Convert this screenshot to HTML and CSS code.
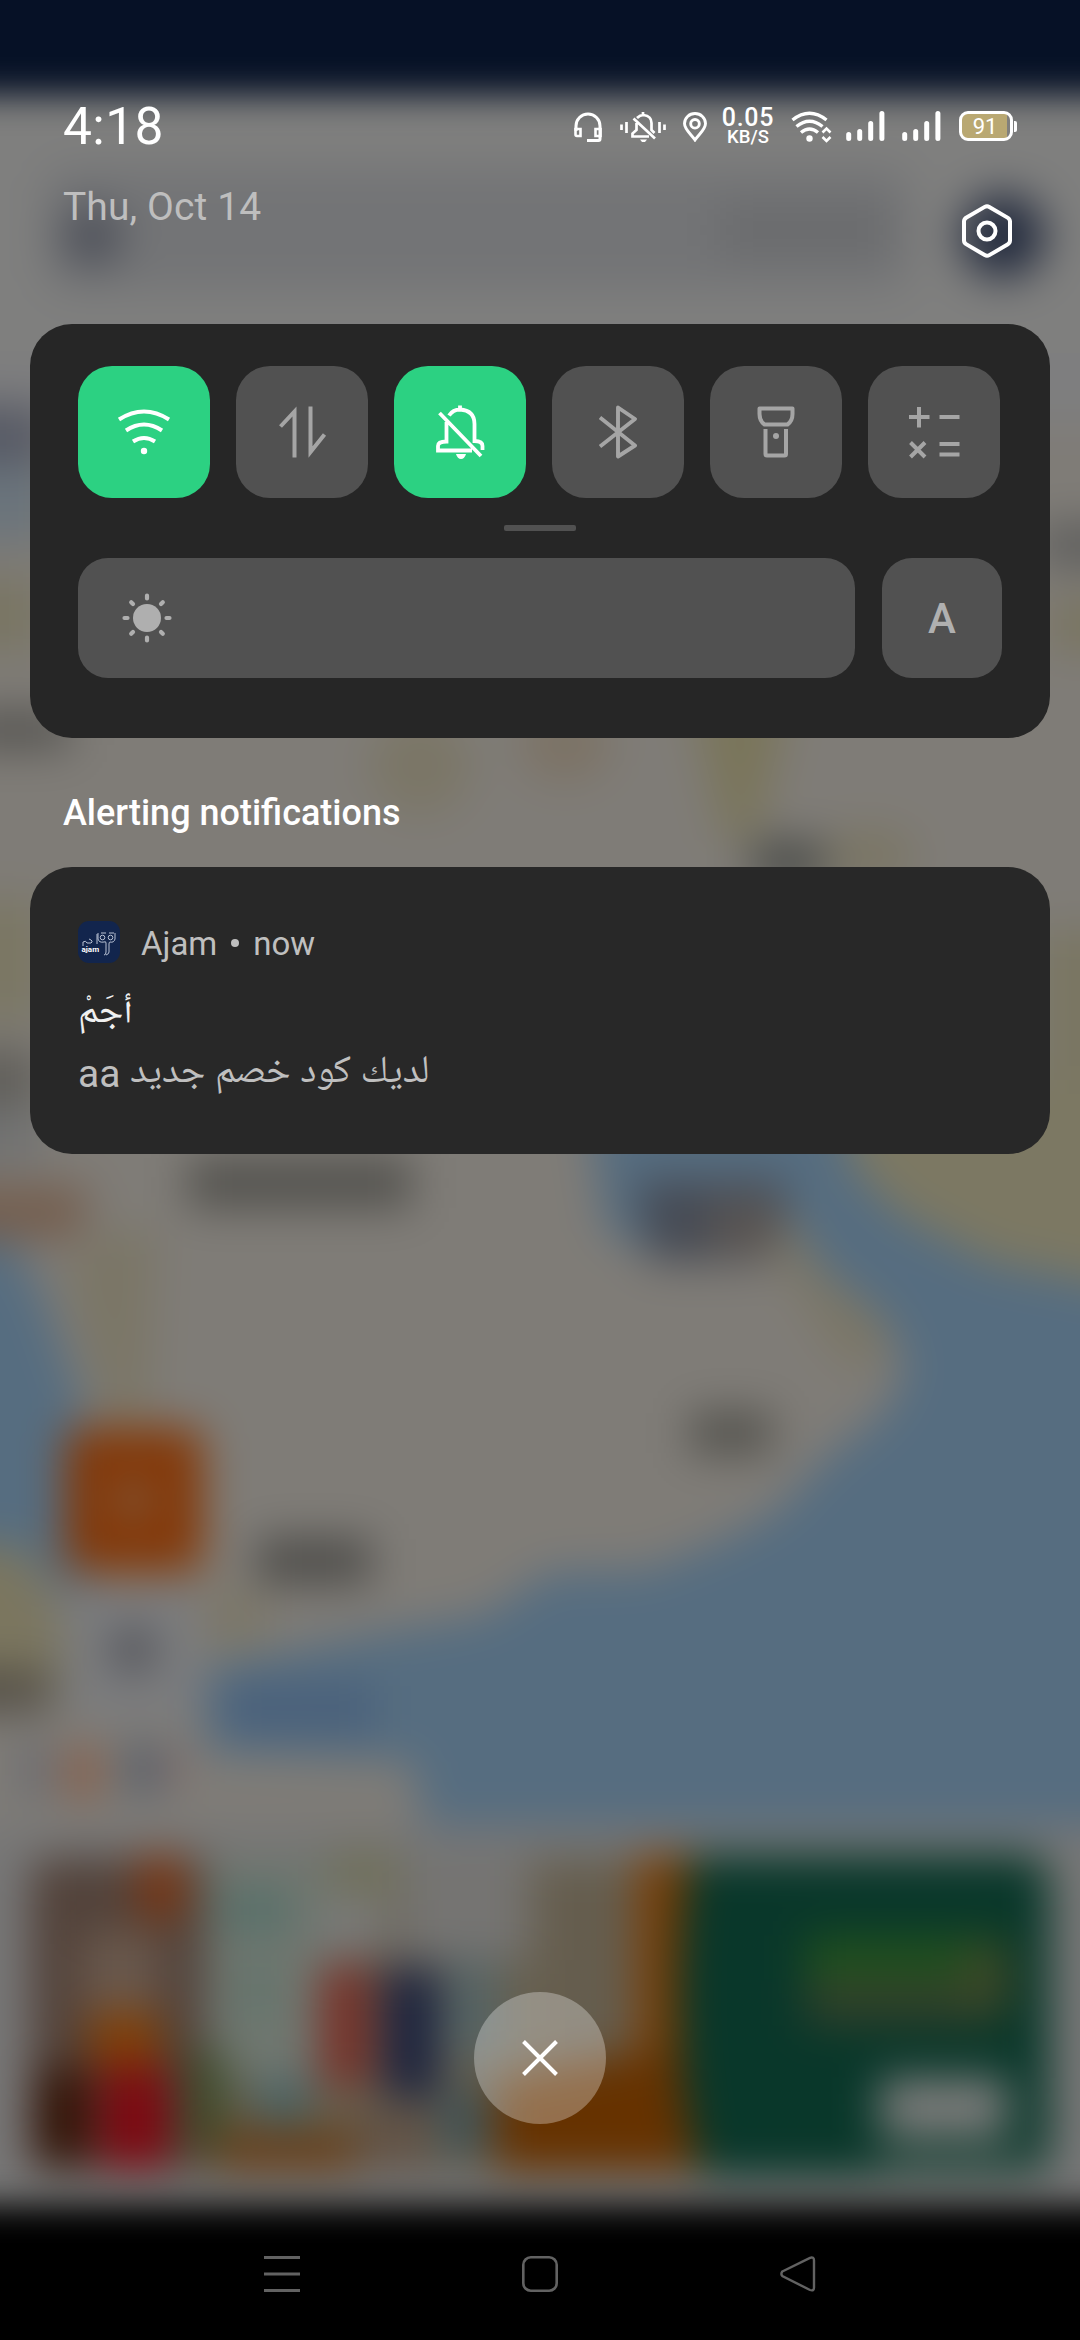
FILE: index.html
```html
<!DOCTYPE html>
<html lang="en">
<head>
<meta charset="utf-8">
<title>Notification shade</title>
<link rel="stylesheet" href="styles.css">
</head>
<body>
<svg class="backdrop" viewBox="0 0 1080 2340" aria-hidden="true">
  <defs>
    <filter id="soft" color-interpolation-filters="sRGB" filterUnits="userSpaceOnUse" x="-100" y="-100" width="1280" height="2540"><feGaussianBlur stdDeviation="22"/></filter>
    <filter id="edge" color-interpolation-filters="sRGB" filterUnits="userSpaceOnUse" x="-100" y="-100" width="1280" height="2640"><feGaussianBlur stdDeviation="17"/></filter>
  </defs>
  <rect width="1080" height="2340" fill="#7f7c77"/>
  <g filter="url(#soft)">
    <rect x="-100" y="-100" width="1280" height="2540" fill="#7f7c77"/>
    <!-- app header and search field -->
    <rect x="-100" y="-100" width="1280" height="453" fill="#7f7f7e"/>
    <rect x="45" y="168" width="865" height="122" rx="24" fill="#737476"/>
    <rect x="720" y="205" width="170" height="50" fill="#6a6b6d"/>
    <circle cx="92" cy="236" r="30" fill="#4d5059"/>
    <circle cx="1003" cy="236" r="42" fill="#232b3e"/>
    <!-- map land, upper part -->
    <rect x="-100" y="353" width="1280" height="70" fill="#7e7e7f"/>
    <rect x="-60" y="405" width="110" height="60" fill="#575a65"/>
    <rect x="-60" y="465" width="110" height="75" fill="#6a747c"/>
    <rect x="-60" y="580" width="100" height="70" fill="#797562"/>
    <rect x="-40" y="712" width="110" height="36" fill="#53524f"/>
    <rect x="1040" y="525" width="100" height="40" fill="#5c5c5b"/>
    <rect x="1050" y="600" width="100" height="50" fill="#79745f"/>
    <ellipse cx="420" cy="765" rx="50" ry="50" fill="#7b7666"/>
    <ellipse cx="565" cy="745" rx="45" ry="35" fill="#7c7264"/>
    <path d="M690 700H790L755 840H725Z" fill="#7a755a"/>
    <ellipse cx="870" cy="855" rx="45" ry="25" fill="#7a7562"/>
    <rect x="752" y="842" width="72" height="40" fill="#484a47"/>
    <rect x="1040" y="930" width="100" height="300" fill="#7a7662"/>
    <rect x="-60" y="900" width="100" height="120" fill="#7b7763"/>
    <rect x="-60" y="1050" width="100" height="55" fill="#605e59"/>
    <rect x="-60" y="1105" width="100" height="60" fill="#717272"/>
    <!-- sea and coastline -->
    <path d="M585 1100H835L855 1170L900 1215L990 1262L1180 1300V1830H425L413 1762L205 1752V1668L372 1634L485 1615L550 1572L647 1570L723 1540L778 1510L826 1458L882 1415L907 1370L885 1318L815 1262L780 1200L770 1250H640L605 1230Z" fill="#566d80"/>
    <path d="M835 1080L855 1170L900 1215L990 1262L1180 1300V1080Z" fill="#7c7863"/>
    <path d="M790 1210L825 1275L890 1325L870 1375L835 1350L780 1260Z" fill="#7b7665"/>
    <path d="M635 1180H785V1220L765 1262H650Z" fill="#464b55"/>
    <rect x="710" y="1200" width="68" height="55" fill="#5a5552"/>
    <path d="M-60 1185H90L80 1240H-60Z" fill="#755f4f"/>
    <path d="M-80 1240H12L45 1300L80 1400L92 1480V1590L50 1585L25 1545H-80Z" fill="#566d80"/>
    <path d="M65 1270L100 1230H155L145 1420H108Z" fill="#7b7666"/>
    <path d="M-80 1545H22L60 1620V1700H-80Z" fill="#7b765f"/>
    <path d="M-80 1670H50V1712H-80Z" fill="#544f46"/>
    <path d="M205 1590H265V1645H205Z" fill="#7c7767"/>
    <rect x="225" y="1685" width="150" height="48" fill="#49607b"/>
    <!-- map labels -->
    <rect x="188" y="1158" width="224" height="50" fill="#53524e"/>
    <rect x="690" y="1412" width="82" height="42" fill="#53524d"/>
    <rect x="257" y="1538" width="114" height="46" fill="#4e4d4a"/>
    <!-- floating map buttons and attribution -->
    <rect x="65" y="1428" width="138" height="144" rx="16" fill="#833808"/>
    <circle cx="133" cy="1500" r="17" fill="#80644f"/>
    <rect x="66" y="1590" width="134" height="128" rx="20" fill="#7b7c7e"/>
    <circle cx="133" cy="1650" r="23" fill="#505157"/>
    <rect x="20" y="1745" width="30" height="50" fill="#67686f"/>
    <rect x="68" y="1748" width="30" height="50" fill="#8a5940"/>
    <rect x="125" y="1745" width="35" height="48" fill="#545c69"/>
    <rect x="165" y="1755" width="20" height="28" fill="#826562"/>
    <!-- page below the map -->
    <rect x="-100" y="1825" width="1280" height="700" fill="#777777"/>
    <!-- banner -->
    <rect x="30" y="1858" width="1018" height="314" rx="20" fill="#68604f"/>
    <rect x="30" y="1858" width="175" height="314" rx="20" fill="#52423a"/>
    <rect x="80" y="1930" width="80" height="90" fill="#69584c"/>
    <rect x="140" y="1855" width="42" height="64" fill="#7c3510"/>
    <rect x="205" y="1860" width="140" height="220" fill="#707770"/>
    <rect x="220" y="1890" width="70" height="40" fill="#546f69"/>
    <rect x="330" y="1850" width="70" height="50" fill="#706f59"/>
    <rect x="325" y="1895" width="60" height="60" fill="#7a7a79"/>
    <rect x="400" y="1850" width="130" height="110" fill="#757472"/>
    <rect x="545" y="1870" width="90" height="190" fill="#655d4e"/>
    <rect x="445" y="1960" width="55" height="100" fill="#556465"/>
    <rect x="240" y="1960" width="30" height="60" fill="#5e736a"/>
    <rect x="258" y="2080" width="50" height="45" fill="#466366"/>
    <rect x="320" y="1965" width="50" height="120" fill="#783027"/>
    <rect x="383" y="1968" width="55" height="130" fill="#1a213d"/>
    <rect x="440" y="2090" width="50" height="65" fill="#3f5256"/>
    <rect x="360" y="2110" width="70" height="60" fill="#625245"/>
    <rect x="36" y="2070" width="50" height="94" fill="#301003"/>
    <rect x="90" y="2012" width="70" height="54" fill="#833f04"/>
    <rect x="100" y="2068" width="70" height="100" fill="#7e0811"/>
    <rect x="185" y="2050" width="40" height="105" fill="#3c4b2a"/>
    <rect x="215" y="2130" width="140" height="42" fill="#663c15"/>
    <rect x="638" y="1855" width="64" height="317" fill="#7a3d04"/>
    <path d="M495 2080L620 2055H690V2172H495Z" fill="#663200"/>
    <path d="M690 1855H1020Q1050 1855 1050 1885V2147Q1050 2177 1020 2177H700Q660 2015 690 1855Z" fill="#09372a"/>
    <rect x="805" y="1935" width="200" height="45" fill="#20501e"/>
    <rect x="805" y="1980" width="200" height="45" fill="#32402a"/>
    <rect x="965" y="1945" width="45" height="60" fill="#3d4827"/>
    <rect x="880" y="2078" width="128" height="58" fill="#7d7d7c"/>
    <rect x="880" y="2150" width="150" height="20" fill="#3b564d"/>
  </g>
  <!-- system bars above and below the app -->
  <g filter="url(#edge)">
    <rect x="-100" y="-100" width="1280" height="195" fill="#061126"/>
    <rect x="-100" y="2205" width="1280" height="300" fill="#000"/>
  </g>
</svg>

<main class="shade">
  <header class="status">
    <div class="clock">4:18</div>
    <div class="status-icons">
      <svg class="ic-headset" viewBox="0 0 28 30"><path d="M2 19V14A12 12 0 0 1 26 14V27Q26 28.500 24.500 28.500H13" fill="none" stroke="#fff" stroke-width="3"/><path d="M1.500 17H6.500V24H3Q1.500 24 1.500 22.500ZM26.500 17H21.500V24H26.500Z" fill="none" stroke="#fff" stroke-width="2.600"/></svg>
      <svg class="ic-mute" viewBox="0 0 46 32"><g fill="none" stroke="#fff" stroke-width="2.700"><path d="M1.500 13.500V19M6.500 11V22M39.500 11V22M44.500 13.500V19"/><path d="M17 7Q20 4 23.500 4Q31.500 5 31.500 12V19L34.500 22M16.500 12V19L12.500 22.500V25.500H29M13.500 7.500L35 27.500M23 1V5"/></g><path d="M20 28.500H27L25 31H22Z" fill="#fff"/></svg>
      <svg class="ic-pin" viewBox="0 0 24 30"><path d="M12 28C8 22 1.500 17.500 1.500 11.500A10.500 10 0 0 1 22.500 11.500C22.500 17.500 16 22 12 28Z" fill="none" stroke="#fff" stroke-width="2.900"/><circle cx="12" cy="11.800" r="4.300" fill="none" stroke="#fff" stroke-width="2.900"/></svg>
      <div class="speed"><span class="rate">0.05</span><span class="unit">KB/S</span></div>
      <svg class="ic-wifi" viewBox="0 0 41 32"><g fill="none" stroke="#fff" stroke-width="3.400"><path d="M1.500 9Q18.500-4.500 35.500 9M5.500 15.500Q18.500 5 31.500 15.500M10 21.500Q18.500 14.500 27 21.500"/></g><circle cx="18.500" cy="27.500" r="3.200" fill="#fff"/><path d="M31.500 21.500L35.500 17.500L39.500 21.500M31.500 26L35.500 30L39.500 26" fill="none" stroke="#fff" stroke-width="2.600"/></svg>
      <svg class="ic-signal" viewBox="0 0 39 30"><path d="M2.700 23.500V27.500M13.700 20.500V27.500M24.700 12.500V27.500M35.900 2.500V27.500" stroke="#fff" stroke-width="5" stroke-linecap="round"/></svg>
      <svg class="ic-signal second" viewBox="0 0 39 30"><path d="M2.700 23.500V27.500M13.700 20.500V27.500M24.700 12.500V27.500M35.900 2.500V27.500" stroke="#fff" stroke-width="5" stroke-linecap="round"/></svg>
      <div class="battery"><span class="battery-body">91</span><span class="battery-tip"></span></div>
    </div>
  </header>

  <div class="date-row">
    <div class="date">Thu, Oct 14</div>
    <svg class="settings" viewBox="0 0 50 54"><path d="M22.700 2.900Q25 1.600 27.300 2.900L45.500 13.600Q48 15 48 17.500V36.500Q48 39 45.500 40.400L27.300 51.100Q25 52.400 22.700 51.100L4.500 40.400Q2 39 2 36.500V17.500Q2 15 4.500 13.600Z" fill="none" stroke="#fff" stroke-width="4"/><circle cx="25" cy="27" r="8.500" fill="none" stroke="#fff" stroke-width="4"/></svg>
  </div>

  <section class="panel">
    <div class="tiles">
      <div class="tile on"><svg viewBox="0 0 54 54"><g fill="none" stroke="#fff" stroke-width="4"><path d="M2 14.500Q27-1.500 52 14.500M9 25.500Q27 13.500 45 25.500M16 36.500Q27 29.500 38 36.500"/></g><circle cx="27" cy="46" r="3.200" fill="#fff"/></svg></div>
      <div class="tile"><svg viewBox="0 0 54 54"><path d="M5.500 21.500L19.500 6.500V52.500M35.500 1.500V47L49.500 29.500" fill="none" stroke="#a5a5a5" stroke-width="4"/></svg></div>
      <div class="tile on"><svg viewBox="0 0 54 54"><g fill="none" stroke="#fff" stroke-width="3.800"><path d="M27 .5V4M16 10.500Q20 4.500 27 4.500Q41.500 5.500 41.500 19V36Q49.500 36 49.500 41V45M13.500 17V36.500Q5 36.500 5 41V45.500H39M6.500 8L48 51"/></g><path d="M23 49H33Q31.500 54 28 54Q24.500 54 23 49Z" fill="#fff"/></svg></div>
      <div class="tile"><svg viewBox="0 0 54 54"><path d="M9 12.500L44 40.500L27 51.500V2.500L44 14L9 41.500" fill="none" stroke="#a5a5a5" stroke-width="3.900" stroke-linejoin="round"/></svg></div>
      <div class="tile"><svg viewBox="0 0 54 54"><g fill="none" stroke="#a5a5a5" stroke-width="4"><path d="M10.500 3.500H43.500V9Q43.500 16 38.500 19.500H15.500Q10.500 16 10.500 9Z" stroke-linejoin="round"/><path d="M16.500 24V49Q16.500 50.500 18 50.500H35.500Q37 50.500 37 49V24"/></g><circle cx="27" cy="31" r="3" fill="#a5a5a5"/></svg></div>
      <div class="tile"><svg viewBox="0 0 54 54"><path d="M2 12H22.500M12 2V22.500M32.500 12H52.500M32.500 39H52.500M32.500 49.500H52.500M3.500 37.500L18 52M18 37.500L3.500 52" fill="none" stroke="#a5a5a5" stroke-width="4"/></svg></div>
    </div>
    <div class="handle"></div>
    <div class="brightness">
      <div class="slider"><svg viewBox="0 0 50 50"><circle cx="25" cy="25" r="14" fill="#afafaf"/><path d="M25 2.500V5.500M25 44.500V47.500M2.500 25H5.500M44.500 25H47.500M9.200 9.200L11 11M39 39L40.800 40.800M9.200 40.800L11 39M39 11L40.800 9.200" stroke="#afafaf" stroke-width="4.200" stroke-linecap="round"/></svg></div>
      <div class="auto">A</div>
    </div>
  </section>

  <h2 class="section-title">Alerting notifications</h2>

  <article class="notification">
    <div class="source">
      <svg class="app-icon" viewBox="0 0 42 42"><rect width="42" height="42" rx="11" fill="#12254d"/><g fill="none" stroke="#b9c2d4" stroke-width="1"><path d="M5 25V21Q8 19 9 22L13 22Q16 20 11 18M19 13V23" /><path d="M20 12V18Q21 22 26 21Q28 20 28 22V31Q28 34 26 34M37 12V18Q36 22 32 21Q31 21 31 23V31Q31 33 28 34M23 12H28M31 12H36"/><circle cx="24.500" cy="16.500" r="2.300"/><circle cx="32.500" cy="16.500" r="2.300"/></g><text x="3.500" y="31" class="logo-word">ajam</text></svg>
      <span class="app-name">Ajam</span><span class="dot"></span><span class="app-name">now</span>
    </div>
    <div class="title" lang="ar" dir="rtl">أجَمْ</div>
    <div class="message" lang="ar" dir="rtl">لديك كود خصم جديد <span class="latin">aa</span></div>
  </article>

  <div class="clear"><svg viewBox="0 0 36 36"><path d="M1.500 1.500L34.500 34.500M34.500 1.500L1.500 34.500" stroke="#fff" stroke-width="4"/></svg></div>

  <nav class="navbar">
    <svg viewBox="0 0 36 36"><path d="M0 1.500H36M0 18H36M0 34.500H36" stroke="#626262" stroke-width="3"/></svg>
    <svg viewBox="0 0 36 36"><rect x="1.300" y="1.300" width="33.400" height="33.400" rx="7.500" fill="none" stroke="#626262" stroke-width="2.600"/></svg>
    <svg viewBox="0 0 36 36"><path d="M2.300 15.500L30 1.800Q34 .5 34 4.500V31.500Q34 35.500 30 34L2.300 20Q.5 18 2.300 15.500Z" fill="none" stroke="#626262" stroke-width="2.400"/></svg>
  </nav>
</main>
</body>
</html>
```

FILE: styles.css
```css
* { box-sizing: border-box; }

body {
  margin: 0;
  width: 1080px;
  height: 2340px;
  overflow: hidden;
  position: relative;
  font-family: Roboto, "Noto Naskh Arabic UI", "Noto Naskh Arabic", "Noto Sans Arabic", "DejaVu Sans", sans-serif;
  color: #fff;
}

svg { display: block; flex: none; }

.backdrop {
  position: absolute;
  inset: 0;
  width: 1080px;
  height: 2340px;
}

.shade {
  position: relative;
  height: 2340px;
  display: flex;
  flex-direction: column;
  padding: 96px 30px 0;
}

.status {
  height: 60px;
  display: flex;
  justify-content: space-between;
  padding: 0 33px;
}

.clock {
  font-size: 51.5px;
  line-height: 62px;
  letter-spacing: 0.4px;
}

.status-icons {
  display: flex;
  align-items: flex-start;
  padding-top: 15px;
}

.ic-headset { width: 28px; height: 30px; margin: 1px 18px 0 0; }
.ic-mute { width: 46px; height: 32px; margin-right: 17px; }
.ic-pin { width: 24px; height: 30px; margin: 1px 13px 0 0; }

.speed {
  width: 56px;
  height: 40px;
  margin: -5px 15px 0 0;
  display: flex;
  flex-direction: column;
  align-items: center;
  font-weight: 500;
}

.rate { font-size: 25px; line-height: 24px; letter-spacing: 0.7px; }
.unit { font-size: 18.5px; line-height: 15px; }

.ic-wifi { width: 41px; height: 32px; margin-right: 14px; }
.ic-signal { width: 39px; height: 30px; margin-right: 17px; }
.ic-signal.second { margin-right: 18px; }

.battery { display: flex; align-items: center; }

.battery-body {
  width: 54px;
  height: 30px;
  border: 3px solid #fff;
  border-radius: 9px;
  background: linear-gradient(90deg, #b9a872 45px, #807f7d 45px);
  font-size: 22px;
  line-height: 25px;
  text-align: center;
  padding-right: 2px;
}

.battery-tip { width: 3px; height: 11px; margin-left: 1px; background: #fff; border-radius: 0 2px 2px 0; }

.date-row {
  height: 168px;
  display: flex;
  justify-content: space-between;
  align-items: flex-start;
  padding: 0 38px 0 33px;
}

.date {
  padding-top: 28px;
  font-size: 39px;
  line-height: 46px;
  color: #bebebe;
  letter-spacing: 0.1px;
}

.settings { width: 50px; height: 54px; margin-top: 48px; }

.panel {
  height: 414px;
  border-radius: 42px;
  background: #262626;
  padding: 42px 48px 0;
}

.tiles { display: flex; gap: 26px; }

.tile {
  width: 132px;
  height: 132px;
  border-radius: 34px;
  background: #515151;
  display: flex;
  align-items: center;
  justify-content: center;
}

.tile.on { background: #2cd182; }
.tile svg { width: 54px; height: 54px; }

.handle {
  width: 72px;
  height: 6px;
  border-radius: 2px;
  margin: 27px auto;
  background: #515151;
}

.brightness { display: flex; justify-content: space-between; }

.slider, .auto {
  height: 120px;
  border-radius: 30px;
  background: #515151;
  display: flex;
  align-items: center;
}

.slider { width: 777px; padding-left: 44px; }
.slider svg { width: 50px; height: 50px; }

.auto {
  width: 120px;
  justify-content: center;
  color: #b0b0b0;
  font-size: 42px;
  font-weight: 500;
}

.section-title {
  margin: 0;
  height: 129px;
  padding: 52px 0 0 33px;
  font-size: 36px;
  line-height: 46px;
  font-weight: 500;
}

.notification {
  height: 287px;
  border-radius: 42px;
  background: #282828;
  padding: 54px 48px 0;
}

.source {
  height: 42px;
  display: flex;
  align-items: center;
  font-size: 33px;
  line-height: 42px;
  color: #bfbfbf;
}

.app-icon { width: 42px; height: 42px; margin-right: 21px; }
.app-name { padding-top: 3px; }
.dot { width: 8px; height: 8px; border-radius: 50%; background: #bfbfbf; margin: 2px 14px 0; }
.logo-word { font-size: 8px; font-weight: 700; fill: #fff; }

.title, .message {
  text-align: left;
  white-space: nowrap;
  height: 60px;
  line-height: 60px;
  font-size: 39px;
}

.title { color: #f0f0f0; margin-top: 21px; }
.message { color: #bfbfbf; }

.clear {
  width: 132px;
  height: 132px;
  border-radius: 50%;
  background: rgba(255, 255, 255, 0.3);
  display: flex;
  align-items: center;
  justify-content: center;
  margin: 838px auto 0;
}

.clear svg { width: 36px; height: 36px; }

.navbar {
  display: flex;
  justify-content: space-between;
  padding: 132px 234px 0;
}

.navbar svg { width: 36px; height: 36px; }
```
